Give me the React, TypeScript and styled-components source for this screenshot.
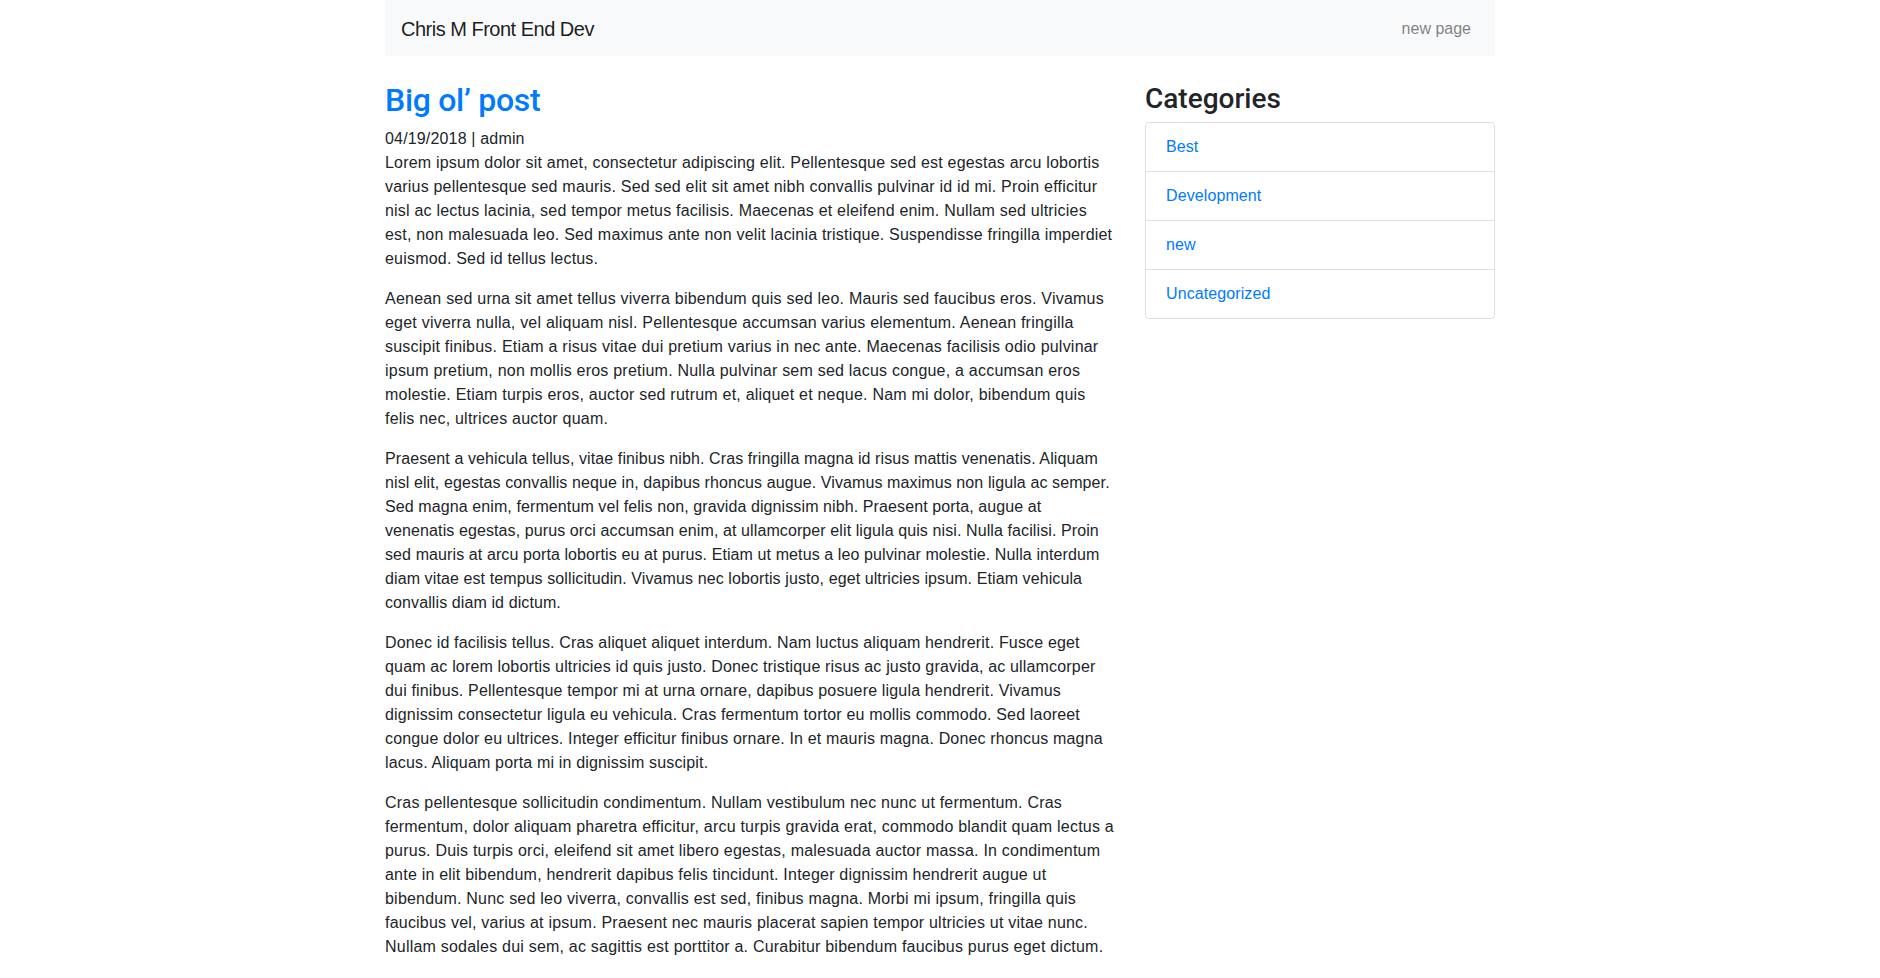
import styled, { createGlobalStyle } from 'styled-components';

const GlobalStyle = createGlobalStyle`
  body {
    margin: 0;
    font-family: "Liberation Sans", Arial, sans-serif;
    font-size: 16px;
    line-height: 1.5;
    letter-spacing: 0.165px;
    color: #212529;
    background: #fff;
  }
  * { box-sizing: border-box; }
`;

const Container = styled.div`
  width: 1140px;
  margin: 0 auto;
  padding: 0 15px;
`;

const Navbar = styled.nav`
  display: flex;
  align-items: center;
  justify-content: space-between;
  height: 56px;
  padding: 9px 16px 7px;
  background: #f8f9fa;
`;

const Brand = styled.a`
  font-size: 20px;
  line-height: 30px;
  letter-spacing: -0.5px;
  color: rgba(0, 0, 0, 0.9);
  text-decoration: none;
`;

const NavLink = styled.a`
  padding: 8px;
  letter-spacing: 0;
  color: rgba(0, 0, 0, 0.5);
  text-decoration: none;
`;

const Row = styled.div`
  display: grid;
  grid-template-columns: 730px 350px;
  column-gap: 30px;
  padding-top: 25px;
`;

const PostTitle = styled.h2`
  margin: 0 0 8px;
  font-family: Roboto, "Liberation Sans", sans-serif;
  font-size: 32px;
  font-weight: 500;
  line-height: 1.2;
  letter-spacing: -0.3px;
  a {
    color: #007bff;
    text-decoration: none;
  }
`;

const Meta = styled.div``;

const Paragraph = styled.p<{ $tracking: number }>`
  margin: 0 0 16px;
  letter-spacing: ${({ $tracking }) => $tracking}px;
`;

const SideTitle = styled.h3`
  margin: 1px 0 6px;
  font-family: Roboto, "Liberation Sans", sans-serif;
  font-size: 28px;
  font-weight: 500;
  line-height: 1.2;
  letter-spacing: 0;
`;

const ListGroup = styled.ul`
  margin: 0;
  padding: 0;
  list-style: none;
  border: 1px solid rgba(0, 0, 0, 0.125);
  border-radius: 4px;
`;

const ListItem = styled.li`
  padding: 12px 20px;
  border-top: 1px solid rgba(0, 0, 0, 0.125);
  letter-spacing: 0.1px;
  &:first-child { border-top: none; }
  a {
    color: #007bff;
    text-decoration: none;
  }
`;

// tracking per paragraph so the line breaks land where the original's do
const paragraphs = [
  {
    tracking: 0.2,
    text: 'Lorem ipsum dolor sit amet, consectetur adipiscing elit. Pellentesque sed est egestas arcu lobortis varius pellentesque sed mauris. Sed sed elit sit amet nibh convallis pulvinar id id mi. Proin efficitur nisl ac lectus lacinia, sed tempor metus facilisis. Maecenas et eleifend enim. Nullam sed ultricies est, non malesuada leo. Sed maximus ante non velit lacinia tristique. Suspendisse fringilla imperdiet euismod. Sed id tellus lectus.',
  },
  {
    tracking: 0.22,
    text: 'Aenean sed urna sit amet tellus viverra bibendum quis sed leo. Mauris sed faucibus eros. Vivamus eget viverra nulla, vel aliquam nisl. Pellentesque accumsan varius elementum. Aenean fringilla suscipit finibus. Etiam a risus vitae dui pretium varius in nec ante. Maecenas facilisis odio pulvinar ipsum pretium, non mollis eros pretium. Nulla pulvinar sem sed lacus congue, a accumsan eros molestie. Etiam turpis eros, auctor sed rutrum et, aliquet et neque. Nam mi dolor, bibendum quis felis nec, ultrices auctor quam.',
  },
  {
    tracking: 0.1,
    text: 'Praesent a vehicula tellus, vitae finibus nibh. Cras fringilla magna id risus mattis venenatis. Aliquam nisl elit, egestas convallis neque in, dapibus rhoncus augue. Vivamus maximus non ligula ac semper. Sed magna enim, fermentum vel felis non, gravida dignissim nibh. Praesent porta, augue at venenatis egestas, purus orci accumsan enim, at ullamcorper elit ligula quis nisi. Nulla facilisi. Proin sed mauris at arcu porta lobortis eu at purus. Etiam ut metus a leo pulvinar molestie. Nulla interdum diam vitae est tempus sollicitudin. Vivamus nec lobortis justo, eget ultricies ipsum. Etiam vehicula convallis diam id dictum.',
  },
  {
    tracking: 0.165,
    text: 'Donec id facilisis tellus. Cras aliquet aliquet interdum. Nam luctus aliquam hendrerit. Fusce eget quam ac lorem lobortis ultricies id quis justo. Donec tristique risus ac justo gravida, ac ullamcorper dui finibus. Pellentesque tempor mi at urna ornare, dapibus posuere ligula hendrerit. Vivamus dignissim consectetur ligula eu vehicula. Cras fermentum tortor eu mollis commodo. Sed laoreet congue dolor eu ultrices. Integer efficitur finibus ornare. In et mauris magna. Donec rhoncus magna lacus. Aliquam porta mi in dignissim suscipit.',
  },
  {
    tracking: 0.213,
    text: 'Cras pellentesque sollicitudin condimentum. Nullam vestibulum nec nunc ut fermentum. Cras fermentum, dolor aliquam pharetra efficitur, arcu turpis gravida erat, commodo blandit quam lectus a purus. Duis turpis orci, eleifend sit amet libero egestas, malesuada auctor massa. In condimentum ante in elit bibendum, hendrerit dapibus felis tincidunt. Integer dignissim hendrerit augue ut bibendum. Nunc sed leo viverra, convallis est sed, finibus magna. Morbi mi ipsum, fringilla quis faucibus vel, varius at ipsum. Praesent nec mauris placerat sapien tempor ultricies ut vitae nunc. Nullam sodales dui sem, ac sagittis est porttitor a. Curabitur bibendum faucibus purus eget dictum.',
  },
];

const categories = ['Best', 'Development', 'new', 'Uncategorized'];

const App = () => (
  <>
    <GlobalStyle />
    <Container>
      <Navbar>
        <Brand href="#">Chris M Front End Dev</Brand>
        <NavLink href="#">new page</NavLink>
      </Navbar>
      <Row>
        <main>
          <PostTitle><a href="#">Big ol’ post</a></PostTitle>
          <Meta>04/19/2018 | admin</Meta>
          {paragraphs.map((p, i) => (
            <Paragraph key={i} $tracking={p.tracking}>{p.text}</Paragraph>
          ))}
        </main>
        <aside>
          <SideTitle>Categories</SideTitle>
          <ListGroup>
            {categories.map(c => (
              <ListItem key={c}><a href="#">{c}</a></ListItem>
            ))}
          </ListGroup>
        </aside>
      </Row>
    </Container>
  </>
);

export default App;
